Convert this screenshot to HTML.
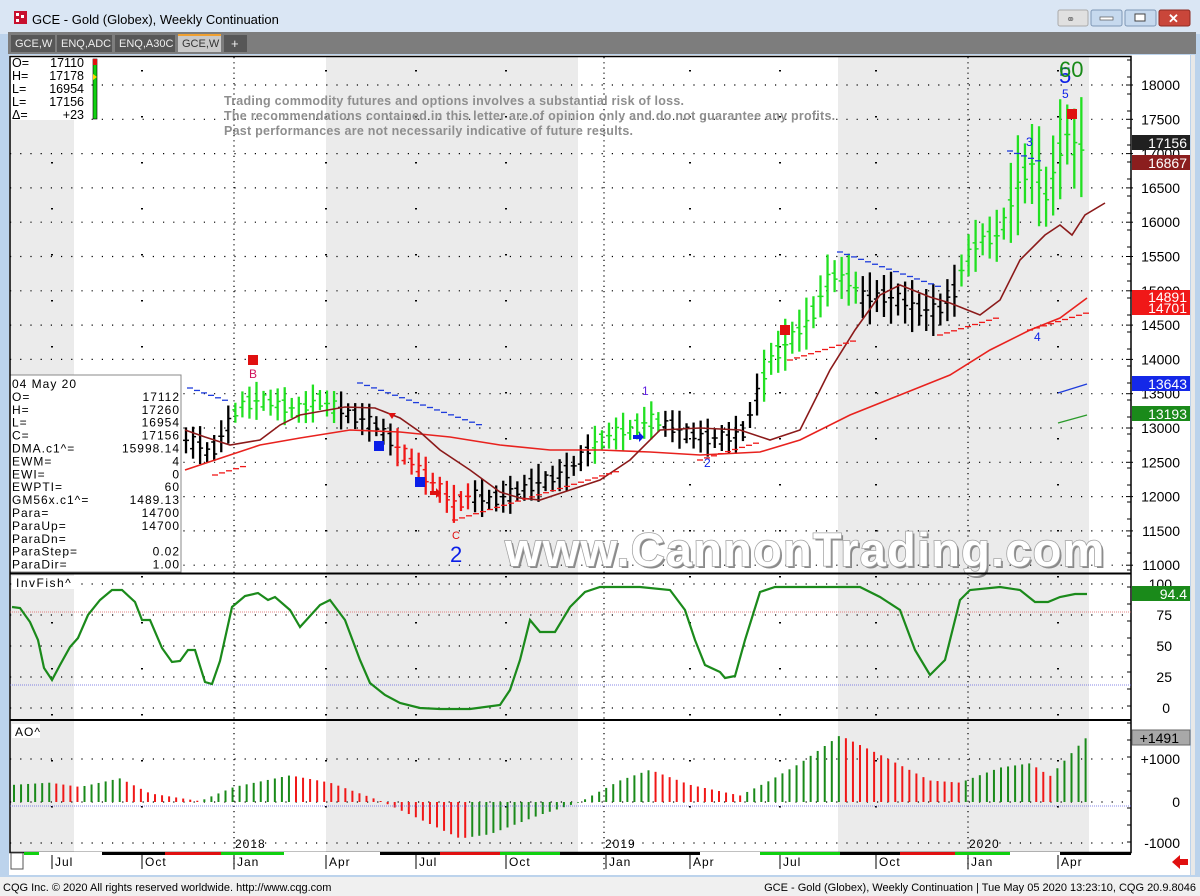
<!DOCTYPE html>
<html><head><meta charset="utf-8"><style>
html,body{margin:0;padding:0;width:1200px;height:896px;overflow:hidden;background:#fff;font-family:"Liberation Sans",sans-serif}
svg text{font-family:"Liberation Sans",sans-serif}
</style></head><body>
<svg id="s" width="1200" height="896" xmlns="http://www.w3.org/2000/svg">
<rect x="0" y="0" width="1200" height="896" fill="#bcd3ec"/>
<rect x="0" y="0" width="1200" height="34" fill="#dae6f4"/>
<rect x="14" y="11" width="13" height="13" fill="#c8102e"/>
<rect x="16" y="13" width="3" height="3" fill="#fff"/><rect x="21" y="15" width="3" height="3" fill="#fff"/><rect x="16" y="19" width="3" height="3" fill="#fff"/>
<text x="32" y="24" font-size="13" fill="#000">GCE - Gold (Globex), Weekly Continuation</text>
<rect x="1058" y="10" width="30" height="16" rx="2" fill="#e0e0e0" stroke="#aaa"/>
<text x="1066" y="23" font-size="11" fill="#777">⚭</text>
<rect x="1091" y="10" width="31" height="16" rx="2" fill="#c6d9ee" stroke="#7f98b6"/>
<rect x="1100" y="17" width="13" height="3" fill="#fff" stroke="#555" stroke-width="0.7"/>
<rect x="1125" y="10" width="31" height="16" rx="2" fill="#c6d9ee" stroke="#7f98b6"/>
<rect x="1135" y="14" width="10" height="7" fill="#fff" stroke="#444"/>
<rect x="1159" y="10" width="31" height="16" rx="2" fill="#c9463a" stroke="#8d2a22"/>
<text x="1168" y="23" font-size="13" font-weight="bold" fill="#fff">✕</text>
<rect x="8" y="32" width="1188" height="22" fill="#7d7d7d"/>
<g font-size="11" fill="#eee">
<rect x="11" y="35" width="44" height="17" fill="#575757"/><text x="15" y="47">GCE,W</text>
<rect x="57" y="35" width="55" height="17" fill="#575757"/><text x="61" y="47">ENQ,ADC</text>
<rect x="115" y="35" width="60" height="17" fill="#575757"/><text x="119" y="47">ENQ,A30C</text>
<rect x="178" y="35" width="43" height="17" fill="#c9c9c9"/><rect x="178" y="34" width="43" height="2" fill="#f0a030"/><text x="182" y="47" fill="#333">GCE,W</text>
<rect x="224" y="35" width="23" height="17" fill="#575757"/><text x="231" y="48" font-size="13">+</text>
</g>
<rect x="9" y="55" width="1181" height="820" fill="#fff"/>
<rect x="1191" y="55" width="4" height="820" fill="#e8e8e8"/>
<g fill="#ebebeb">
<rect x="10" y="57" width="64" height="795"/>
<rect x="326" y="57" width="252" height="795"/>
<rect x="838" y="57" width="251" height="795"/>
</g>
<g id="grid"></g>
<g id="ao"></g>
<g id="bars"></g>
<polyline fill="none" stroke="#e8221e" stroke-width="1.6" points="185,470 230,455 260,445 300,438 350,430 400,432 450,437 500,445 550,450 600,450 650,452 700,455 760,452 800,440 850,415 900,395 950,375 990,350 1030,330 1060,318 1087,298"/>
<polyline fill="none" stroke="#8b1a1a" stroke-width="1.6" points="185,430 205,437 230,445 260,440 280,425 300,415 345,407 375,408 400,418 420,432 440,450 470,470 500,492 520,498 540,500 570,490 600,480 630,460 660,430 700,428 740,430 770,440 800,430 830,370 855,330 880,295 900,285 930,297 950,303 980,315 1000,300 1020,260 1045,235 1060,225 1072,235 1085,215 1105,203"/>
<g stroke="#1e3cdc" stroke-width="1.3" id="sar"></g>
<rect x="248" y="355" width="10" height="10" fill="#e01010"/>
<text x="249" y="378" font-size="12" fill="#d0105a">B</text>
<rect x="780" y="325" width="10" height="10" fill="#e01010"/>
<rect x="1067" y="109" width="10" height="10" fill="#e01010"/>
<rect x="374" y="441" width="10" height="10" fill="#0a1ee8"/>
<rect x="415" y="477" width="10" height="10" fill="#0a1ee8"/>
<polygon points="388,413 396,413 392,419" fill="#e01010"/>
<polygon points="430,491 436,491 436,488 441,493 436,498 436,495 430,495" fill="#e01010"/>
<polygon points="633,435 639,435 639,432 644,437 639,442 639,439 633,439" fill="#0a1ee8"/>
<text x="452" y="539" font-size="11" fill="#e01010">C</text>
<text x="450" y="562" font-size="22" fill="#0a1ee8">2</text>
<text x="642" y="395" font-size="12" fill="#6020e0">1</text>
<text x="704" y="467" font-size="12" fill="#0a1ee8">2</text>
<text x="1026" y="146" font-size="12" fill="#0a1ee8">3</text>
<text x="1034" y="341" font-size="12" fill="#0a1ee8">4</text>
<text x="1062" y="98" font-size="12" fill="#0a1ee8">5</text>
<text x="1059" y="83" font-size="22" fill="#0a1ee8">5</text>
<text x="1059" y="77" font-size="22" fill="#188a18">60</text>
<line x1="1058" y1="393" x2="1087" y2="384" stroke="#1e3cdc" stroke-width="1.3"/>
<line x1="1058" y1="423" x2="1087" y2="415" stroke="#2a9a2a" stroke-width="1.3"/>
<g font-size="12.5" font-weight="bold" fill="#8e8e8e" style="letter-spacing:0.25px">
<text x="224" y="105">Trading commodity futures and options involves a substantial risk of loss.</text>
<text x="224" y="120">The recommendations contained in this letter are of opinion only and do not guarantee any profits.</text>
<text x="224" y="135">Past performances are not necessarily indicative of future results.</text>
</g>
<text x="505" y="566" font-size="47" font-weight="bold" fill="#8a8a8a" style="letter-spacing:1.2px" transform="translate(2,2)">www.CannonTrading.com</text>
<text x="505" y="566" font-size="47" font-weight="bold" fill="#fff" stroke="#a0a0a0" stroke-width="1.5" paint-order="stroke" style="letter-spacing:1.2px">www.CannonTrading.com</text>
<rect x="10" y="57" width="80" height="63" fill="#fff"/>
<g font-size="12.5" fill="#000">
<text x="12" y="67">O=</text><text x="84" y="67" text-anchor="end">17110</text>
<text x="12" y="80">H=</text><text x="84" y="80" text-anchor="end">17178</text>
<text x="12" y="93">L=</text><text x="84" y="93" text-anchor="end">16954</text>
<text x="12" y="106">L=</text><text x="84" y="106" text-anchor="end">17156</text>
<text x="12" y="119">Δ=</text><text x="84" y="119" text-anchor="end">+23</text>
</g>
<rect x="93" y="59" width="4" height="60" fill="#10d010" stroke="#000" stroke-width="0.6"/>
<rect x="93" y="59" width="4" height="6" fill="#e01010"/>
<polygon points="93,74 97,77 93,80" fill="#ffd800"/>
<rect x="10" y="375" width="171" height="197" fill="#fff" stroke="#888"/>
<g font-size="12" fill="#000" style="letter-spacing:1px" id="db"></g>
<g stroke="#000" fill="none">
<rect x="10" y="56.5" width="1121" height="796" stroke-width="1.5"/>
<line x1="10" y1="573.5" x2="1131" y2="573.5" stroke-width="2"/>
<line x1="10" y1="720" x2="1131" y2="720" stroke-width="2"/>
</g>
<rect x="12" y="576" width="66" height="13" fill="#fff"/>
<text x="16" y="587" font-size="12" style="letter-spacing:1.5px">InvFish^</text>
<rect x="12" y="724" width="28" height="14" fill="#fff"/>
<text x="15" y="736" font-size="12" style="letter-spacing:1px">AO^</text>
<line x1="10" y1="612" x2="1131" y2="612" stroke="#e06060" stroke-width="0.8" stroke-dasharray="1,1"/>
<line x1="10" y1="685" x2="1131" y2="685" stroke="#6060e0" stroke-width="0.8" stroke-dasharray="1,1"/>
<line x1="10" y1="806" x2="1131" y2="806" stroke="#6060e0" stroke-width="0.8" stroke-dasharray="1,1"/>
<polyline fill="none" stroke="#1b8a1b" stroke-width="2.2" points="12,607 20,608 30,622 38,640 44,668 52,680 60,665 70,647 78,638 88,615 100,600 112,590 122,590 135,602 142,620 150,620 162,648 172,662 180,661 188,650 195,650 205,682 212,684 220,661 232,607 245,596 258,593 268,600 275,597 290,610 300,627 320,605 330,600 345,620 360,660 370,683 385,695 400,703 420,708 440,709 470,709 500,705 510,690 520,660 530,620 540,632 555,632 570,607 585,592 600,587 640,587 670,590 685,610 695,640 705,665 720,672 725,678 735,676 745,640 760,592 775,587 860,587 880,597 900,610 915,650 930,675 945,660 960,600 970,590 1000,587 1020,590 1035,602 1048,602 1060,597 1075,594 1087,594"/>
<g id="strip"></g>
<g font-size="12" fill="#000" style="letter-spacing:1px">
<text x="235" y="848">2018</text><text x="605" y="848">2019</text><text x="969" y="848">2020</text>
</g>
<g font-size="12" fill="#000" style="letter-spacing:1px" id="months"></g>
<rect x="11" y="853" width="12" height="16" fill="#fff" stroke="#555"/>
<polygon points="1172,862 1180,855 1180,859 1188,859 1188,865 1180,865 1180,869" fill="#e01010"/>
<g id="axis" font-size="14" fill="#000"></g>
<g font-size="14" fill="#fff">
<rect x="1132" y="135" width="58" height="15" fill="#202020"/><text x="1187" y="148" text-anchor="end">17156</text>
<rect x="1132" y="155" width="58" height="15" fill="#8b1e1e"/><text x="1187" y="168" text-anchor="end">16867</text>
<rect x="1132" y="300" width="58" height="15" fill="#f01818"/><text x="1187" y="313" text-anchor="end">14701</text>
<rect x="1132" y="290" width="58" height="13" fill="#f01818"/><text x="1187" y="302" text-anchor="end">14891</text>
<rect x="1132" y="376" width="58" height="15" fill="#1428e8"/><text x="1187" y="389" text-anchor="end">13643</text>
<rect x="1132" y="406" width="58" height="15" fill="#1a8a1a"/><text x="1187" y="419" text-anchor="end">13193</text>
<rect x="1132" y="586" width="58" height="15" fill="#1a8a1a"/><text x="1187" y="599" text-anchor="end">94.4</text>
<rect x="1132" y="730" width="58" height="15" fill="#a8a8a8" stroke="#666"/><text x="1179" y="743" text-anchor="end" fill="#000">+1491</text>
</g>
<rect x="0" y="877" width="1200" height="19" fill="#f0f0f0"/>
<text x="3" y="891" font-size="11" fill="#000">CQG Inc. © 2020 All rights reserved worldwide. http://www.cqg.com</text>
<text x="1196" y="891" font-size="11" fill="#000" text-anchor="end">GCE - Gold (Globex), Weekly Continuation | Tue May 05 2020 13:23:10, CQG 20.9.8046</text>
</svg>
<script>
var NS="http://www.w3.org/2000/svg";
function el(p,t,a,txt){var e=document.createElementNS(NS,t);for(var k in a)e.setAttribute(k,a[k]);if(txt!=null)e.textContent=txt;document.getElementById(p).appendChild(e);return e;}
function interp(pts,x){for(var i=0;i<pts.length-1;i++){if(x>=pts[i][0]&&x<=pts[i+1][0]){var t=(x-pts[i][0])/(pts[i+1][0]-pts[i][0]);return pts[i][1]+t*(pts[i+1][1]-pts[i][1]);}}return x<pts[0][0]?pts[0][1]:pts[pts.length-1][1];}
function py(p){return 85+(18000-p)*0.0686;}
for(var p=11000;p<=18000;p+=500){var y=py(p);el("grid","line",{x1:10,y1:y,x2:1131,y2:y,stroke:"#000","stroke-width":1.2,"stroke-dasharray":"1.2,9"});
 el("axis","text",{x:1180,y:y+5,"text-anchor":"end"},p);el("axis","line",{x1:1126,y1:y,x2:1133,y2:y,stroke:"#000"});}
[[100,584],[75,615],[50,646],[25,677],[0,708]].forEach(function(a){el("grid","line",{x1:10,y1:a[1],x2:1131,y2:a[1],stroke:"#000","stroke-width":1.2,"stroke-dasharray":"1.2,9"});el("axis","text",{x:a[0]==0?1170:1172,y:a[1]+5,"text-anchor":"end"},a[0]);});
[[1000,759],[0,802],[-1000,843]].forEach(function(a){el("grid","line",{x1:10,y1:a[1],x2:1131,y2:a[1],stroke:"#000","stroke-width":1.2,"stroke-dasharray":"1.2,9"});el("axis","text",{x:1180,y:a[1]+5,"text-anchor":"end"},(a[0]>0?"+":"")+a[0]);});
[234,604,968].forEach(function(x){el("grid","line",{x1:x,y1:57,x2:x,y2:870,stroke:"#000","stroke-width":1.2,"stroke-dasharray":"1.2,4"});});
el("grid","line",{x1:1131,y1:57,x2:1131,y2:852,stroke:"#000","stroke-width":1});
for(var y=60;y<852;y+=17)el("grid","line",{x1:1127,y1:y,x2:1131,y2:y,stroke:"#000"});
[52,142,326,416,506,690,780,876,1058].forEach(function(x){for(var y=70;y<850;y+=46)el("grid","rect",{x:x-1,y:y,width:2,height:1.5,fill:"#000"});});
[["Jul",52],["Oct",142],["Jan",234],["Apr",326],["Jul",416],["Oct",506],["Jan",606],["Apr",690],["Jul",780],["Oct",876],["Jan",968],["Apr",1058]].forEach(function(m){el("months","text",{x:m[1]+3,y:866},m[0]);el("months","line",{x1:m[1],y1:855,x2:m[1],y2:869,stroke:"#000"});});
[[24,39,"#10d010"],[39,102,"#fff"],[102,165,"#000"],[165,221,"#e01010"],[221,284,"#10d010"],[284,380,"#fff"],[380,440,"#000"],[440,500,"#e01010"],[500,560,"#10d010"],[560,700,"#000"],[700,760,"#fff"],[760,840,"#10d010"],[840,900,"#000"],[900,955,"#e01010"],[955,1010,"#10d010"],[1010,1060,"#fff"],[1060,1131,"#000"]].forEach(function(s){el("strip","rect",{x:s[0],y:852,width:s[1]-s[0],height:3,fill:s[2]});});
var mid=[[185,440],[200,445],[210,455],[225,430],[240,405],[260,400],[280,405],[300,410],[320,400],[340,410],[360,418],[380,428],[400,450],[420,470],[440,490],[455,505],[470,495],[490,500],[510,495],[530,485],[550,480],[570,470],[590,448],[610,435],[630,430],[650,420],[670,425],[690,435],[710,438],[730,438],[745,430],[755,400],[770,360],[790,340],[810,320],[830,275],[850,280],[865,300],[880,295],[900,300],[920,310],[940,310],[955,290],[965,260],[980,240],[1000,235],[1010,205],[1020,180],[1035,160],[1045,200],[1055,170],[1065,130],[1075,150],[1086,145]];
function col(x){if(x<230)return"#000";if(x<340)return"#22e022";if(x<395)return"#000";if(x<470)return"#f01818";if(x<590)return"#000";if(x<660)return"#22e022";if(x<762)return"#000";if(x<860)return"#22e022";if(x<960)return"#000";return"#22e022";}
var n=0;
for(var x=186;x<=1087;x+=7.05){n++;var m=interp(mid,x);var h=x>1010?30+(n%3)*10:(x>750?16+(n%3)*5:10+(n%4)*3);var c=col(x);var o=((n*7)%5-2)*3;
 el("bars","line",{x1:x,y1:m-h,x2:x,y2:m+h,stroke:c,"stroke-width":2.3});
 el("bars","line",{x1:x-3,y1:m+o,x2:x,y2:m+o,stroke:c,"stroke-width":1.5});
 el("bars","line",{x1:x,y1:m-o,x2:x+3,y2:m-o,stroke:c,"stroke-width":1.5});}
var sb=[[190,388,230],[360,383,480],[840,252,945],[1010,151,1045]];
sb.forEach(function(s){for(var x=s[0];x<s[2];x+=7){var y=s[1]+(x-s[0])*0.35;el("sar","line",{x1:x-3,y1:y,x2:x+3,y2:y});}});
var rb=[[215,475,245],[455,520,620],[700,460,760],[790,360,860],[940,335,1000],[1030,330,1090]];
rb.forEach(function(s){for(var x=s[0];x<s[2];x+=7){var y=s[1]-(x-s[0])*0.3;el("sar","line",{x1:x-3,y1:y,x2:x+3,y2:y,stroke:"#f01818"});}});
var ao=[[14,400],[50,450],[80,350],[120,550],[150,200],[200,20],[234,350],[290,620],[330,450],[380,30],[420,-400],[460,-850],[490,-750],[540,-300],[580,0],[620,500],[650,750],[690,400],[740,150],[770,500],[800,900],[840,1550],[880,1100],[930,500],[960,450],[1000,800],[1030,900],[1050,600],[1070,1100],[1086,1491]];
var prev=null;
for(var x=14;x<=1087;x+=7.05){var v=interp(ao,x);var c=(prev==null||v>=prev)?"#1a8a1a":"#f01818";prev=v;var y=802-0.043*v;
 el("ao","line",{x1:x,y1:802,x2:x,y2:y,stroke:c,"stroke-width":2});}
var rows=[["04 May 20",""],["O=","17112"],["H=","17260"],["L=","16954"],["C=","17156"],["DMA.c1^=","15998.14"],["EWM=","4"],["EWI=","0"],["EWPTI=","60"],["GM56x.c1^=","1489.13"],["Para=","14700"],["ParaUp=","14700"],["ParaDn=",""],["ParaStep=","0.02"],["ParaDir=","1.00"]];
rows.forEach(function(r,i){var y=388+i*12.9;el("db","text",{x:12,y:y},r[0]);if(r[1])el("db","text",{x:180,y:y,"text-anchor":"end"},r[1]);});
</script>
</body></html>
